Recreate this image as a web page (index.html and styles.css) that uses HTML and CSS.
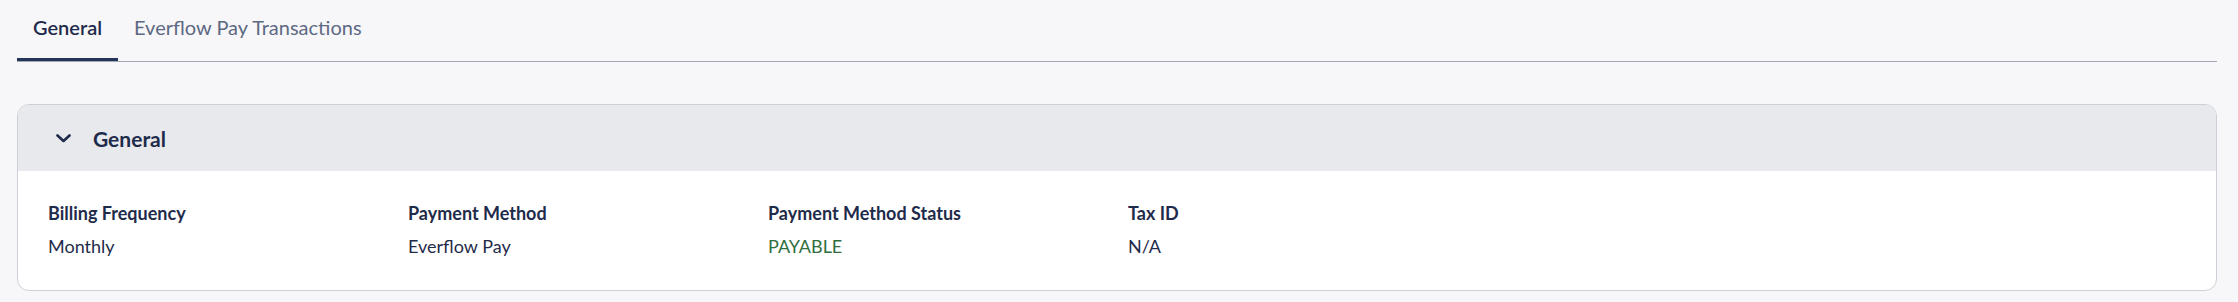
FILE: index.html
```html
<!DOCTYPE html>
<html lang="en">
<head>
<meta charset="UTF-8">
<meta name="viewport" content="width=device-width, initial-scale=1.0">
<title>Billing</title>
<link rel="stylesheet" href="styles.css">
</head>
<body>
<div class="page">
    <div class="tabs">
        <div class="tab active">General</div>
        <div class="tab">Everflow Pay Transactions</div>
    </div>

    <div class="card">
        <div class="card-header">
            <svg class="chevron" width="15" height="9" viewBox="0 0 15 9">
                <path d="M1.5 1.5 L7.5 7 L13.5 1.5" fill="none" stroke="#1f2b4a" stroke-width="2.6" stroke-linecap="round" stroke-linejoin="round"/>
            </svg>
            <span class="card-title">General</span>
        </div>
        <div class="card-body">
            <div class="field">
                <div class="label">Billing Frequency</div>
                <div class="value">Monthly</div>
            </div>
            <div class="field">
                <div class="label">Payment Method</div>
                <div class="value">Everflow Pay</div>
            </div>
            <div class="field">
                <div class="label">Payment Method Status</div>
                <div class="value status">PAYABLE</div>
            </div>
            <div class="field">
                <div class="label">Tax ID</div>
                <div class="value">N/A</div>
            </div>
        </div>
    </div>
</div>
</body>
</html>
```

FILE: styles.css
```css
body {
    margin: 0;
    padding: 0;
    background-color: #f7f7f9;
    font-family: Lato, "Open Sans", sans-serif;
    color: #1f2b4a;
}

.page {
    padding: 0 21px 0 17px;
}

.tabs {
    display: flex;
    border-bottom: 1px solid #a3a8b5;
}

.tab {
    font-size: 20px;
    line-height: 24px;
    padding: 15px 16px 19px;
    border-bottom: 3px solid transparent;
    color: #5d6983;
}

.tab.active {
    color: #1f2b4a;
    font-weight: 600;
    border-bottom-color: #24355a;
}

.card {
    margin-top: 42px;
    border: 1px solid #cdd0d8;
    border-radius: 12px;
    background-color: #fff;
    overflow: hidden;
}

.card-header {
    display: flex;
    align-items: center;
    height: 66px;
    padding-left: 38px;
    background-color: #e8e9ed;
}

.chevron {
    margin-right: 22px;
}

.card-title {
    font-size: 21px;
    font-weight: 700;
}

.card-body {
    display: grid;
    grid-template-columns: repeat(4, 360px);
    padding: 30px 30px 32px;
}

.label {
    font-size: 18px;
    line-height: 24px;
    font-weight: 700;
}

.value {
    font-size: 18px;
    line-height: 24px;
    margin-top: 9px;
}

.status {
    color: #2f6e3e;
}
```
